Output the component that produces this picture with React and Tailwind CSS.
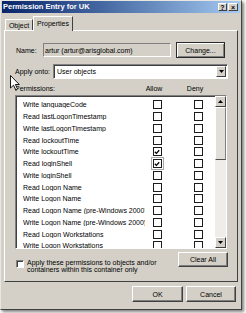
import React from "react";

const rows = [
  ["Write languageCode", false],
  ["Read lastLogonTimestamp", false],
  ["Write lastLogonTimestamp", false],
  ["Read lockoutTime", false],
  ["Write lockoutTime", true],
  ["Read loginShell", true, true],
  ["Write loginShell", false],
  ["Read Logon Name", false],
  ["Write Logon Name", false],
  ["Read Logon Name (pre-Windows 2000)", false],
  ["Write Logon Name (pre-Windows 2000)", false],
  ["Read Logon Workstations", false],
  ["Write Logon Workstations", false],
];

function Check({ checked, focus }) {
  return (
    <div
      className={
        "w-[9px] h-[9px] border-[1.5px] border-[#1c1c1c] bg-white flex items-center justify-center " +
        (focus ? "outline outline-1 outline-[#a9a9a9] outline-offset-[1px]" : "")
      }
    >
      {checked && (
        <svg width="6" height="6" viewBox="0 0 6 6">
          <path d="M0.8 2.8 L2.4 4.4 L5.2 1.2" fill="none" stroke="#000" strokeWidth="1.3" />
        </svg>
      )}
    </div>
  );
}

function Btn({ children, className = "", dflt = false }) {
  return (
    <div
      className={
        "flex items-center justify-center bg-[#d4d0c8] text-[7px] leading-none text-black " +
        (dflt
          ? "border border-[#2a2a2a] shadow-[inset_1px_1px_#ffffff,inset_-1px_-1px_#808080] "
          : "border border-t-white border-l-white border-r-[#404040] border-b-[#404040] shadow-[inset_-1px_-1px_#808080] ") +
        className
      }
    >
      {children}
    </div>
  );
}

function Arrow({ up }) {
  return (
    <svg width="5" height="3" viewBox="0 0 5 3">
      <path d={up ? "M0 3 L2.5 0 L5 3 Z" : "M0 0 L5 0 L2.5 3 Z"} fill="#000" />
    </svg>
  );
}

export default function App() {
  return (
    <div className="w-[246px] h-[313px] bg-white relative overflow-hidden font-['Liberation_Sans',Arial,sans-serif]">
      <div className="w-[242px] h-[310px] bg-[#d4d0c8] border-t border-l border-t-[#e8e6e0] border-l-[#e8e6e0] border-r border-b border-r-[#404040] border-b-[#404040] shadow-[2px_2px_3px_rgba(0,0,0,0.5)] flex flex-col">
        {/* Title bar */}
        <div className="h-[12px] mx-[1px] bg-gradient-to-r from-[#0a246a] to-[#a6caf0] flex items-center justify-between pl-[1px] pr-[2px]">
          <span className="text-white font-bold text-[7.5px] leading-none">Permission Entry for UK</span>
          <div className="flex items-center gap-[1px]">
            <div className="w-[9px] h-[8px] bg-[#d4d0c8] border border-t-white border-l-white border-r-[#404040] border-b-[#404040] flex items-center justify-center text-[7px] font-bold leading-none">?</div>
            <div className="w-[10px] h-[8px] bg-[#d4d0c8] border border-t-white border-l-white border-r-[#404040] border-b-[#404040] flex items-center justify-center text-[7px] font-bold leading-none">×</div>
          </div>
        </div>

        {/* Tabs */}
        <div className="h-[17px] flex items-end pl-[4px]">
          <div className="h-[11px] w-[28px] border-t border-l border-t-white border-l-white border-r border-r-[#404040] flex items-center justify-center text-[7px] leading-none text-black">
            Object
          </div>
          <div className="h-[15px] w-[40px] -mb-[1px] relative z-10 bg-[#d4d0c8] border-t border-l border-t-white border-l-white border-r border-r-[#404040] flex items-start justify-center pt-[3px] text-[7px] leading-none text-black">
            Properties
          </div>
        </div>

        {/* Tab panel */}
        <div className="mx-[3px] h-[252px] border border-t-white border-l-white border-r-[#404040] border-b-[#404040] pt-[11px] pl-[10px] pr-[9px] flex flex-col text-[7px] leading-none text-black">
          {/* Name row */}
          <div className="h-[16px] flex items-center">
            <span className="w-[28px] pl-[1px]">Name:</span>
            <div className="w-[128px] h-[14px] border border-t-[#808080] border-l-[#808080] border-r-white border-b-white bg-[#d4d0c8] flex items-center pl-[1px] whitespace-nowrap overflow-hidden">
              artur (artur@arisglobal.com)
            </div>
            <Btn dflt className="w-[49px] h-[16px] ml-[5px]">Change...</Btn>
          </div>

          {/* Apply onto */}
          <div className="h-[15px] mt-[6px] flex items-center">
            <span className="w-[38px]">Apply onto:</span>
            <div className="flex-1 h-[15px] border border-t-[#808080] border-l-[#808080] border-r-white border-b-white shadow-[inset_1px_1px_#404040] bg-white flex items-center pl-[3px] pr-[1px]">
              <span className="flex-1">User objects</span>
              <div className="w-[10px] h-[11px] bg-[#d4d0c8] border border-t-white border-l-white border-r-[#404040] border-b-[#404040] flex items-center justify-center">
                <Arrow />
              </div>
            </div>
          </div>

          {/* Header */}
          <div className="h-[10px] mt-[4px] flex items-center">
            <span className="w-[132px]">Permissions:</span>
            <div className="w-[14px] flex justify-center">Allow</div>
            <div className="w-[27px]" />
            <div className="w-[14px] flex justify-center">Deny</div>
          </div>

          {/* List */}
          <div className="mt-[2px] w-[212px] h-[154px] border border-t-[#808080] border-l-[#808080] border-r-white border-b-white shadow-[inset_1px_1px_#404040] bg-white flex overflow-hidden">
            <div className="flex-1 pt-[3px] pl-[7px] overflow-hidden">
              {rows.map(([label, allow, focus], i) => (
                <div key={i} className="h-[11.75px] flex items-center">
                  <span className="w-[122px] mr-[5px] overflow-hidden whitespace-nowrap">{label}</span>
                  <div className="w-[14px] flex justify-center">
                    <Check checked={allow} focus={focus} />
                  </div>
                  <div className="w-[27px]" />
                  <div className="w-[14px] flex justify-center">
                    <Check checked={false} />
                  </div>
                </div>
              ))}
            </div>
            {/* Scrollbar */}
            <div className="w-[11px] flex flex-col bg-[#eeede9]">
              <div className="h-[11px] bg-[#d4d0c8] border border-t-white border-l-white border-r-[#404040] border-b-[#404040] flex items-center justify-center">
                <Arrow up />
              </div>
              <div className="h-[53px] bg-[#e2dfd9] border border-t-white border-l-white border-r-[#808080] border-b-[#505050]" />
              <div className="flex-1" />
              <div className="h-[11px] bg-[#d4d0c8] border border-t-white border-l-white border-r-[#404040] border-b-[#404040] flex items-center justify-center">
                <Arrow />
              </div>
            </div>
          </div>

          {/* Apply checkbox row */}
          <div className="mt-[3px] flex items-start">
            <div className="mt-[8px] ml-[1px] w-[8px] h-[8px] border border-t-[#808080] border-l-[#808080] border-r-white border-b-white shadow-[inset_1px_1px_#404040] bg-white" />
            <div className="ml-[3px] mt-[7px] leading-[7px] whitespace-nowrap">
              <div>Apply these permissions to objects and/or</div>
              <div>containers within this container only</div>
            </div>
            <Btn className="ml-auto w-[50px] h-[15px]">Clear All</Btn>
          </div>
        </div>

        {/* Bottom buttons */}
        <div className="mt-[4px] flex justify-end gap-[3px] pr-[5px]">
          <Btn className="w-[51px] h-[16px]">OK</Btn>
          <Btn className="w-[50px] h-[16px]">Cancel</Btn>
        </div>
      </div>

      {/* Mouse cursor */}
      <svg className="absolute left-[10px] top-[75px]" width="10" height="16" viewBox="0 0 10 16">
        <path d="M0.5 0.5 L0.5 13 L3.5 10.2 L5.8 15 L7.6 14.1 L5.4 9.5 L9.3 9.5 Z" fill="#fff" stroke="#000" strokeWidth="0.9" strokeLinejoin="round" />
      </svg>
    </div>
  );
}
